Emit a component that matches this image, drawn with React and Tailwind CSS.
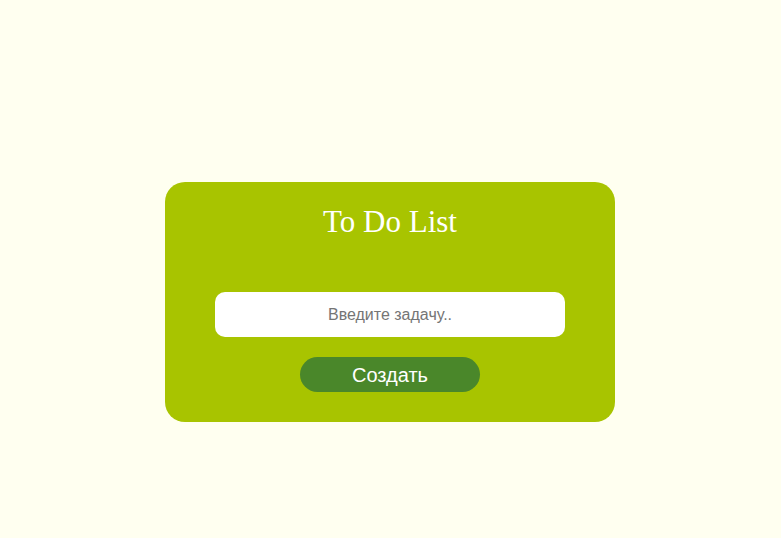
import React, { useState } from 'react';

const App = () => {
  const [task, setTask] = useState('');

  return (
    <div className="min-h-[538px] w-full bg-[#fffff0] flex justify-center pt-[182px] pr-px">
      <div className="w-[450px] h-[240px] bg-[#a8c400] rounded-[20px] flex flex-col items-center">
        <h1 className="mt-[20px] text-[31px] leading-[40px] text-white font-['Liberation_Serif',serif]">
          To Do List
        </h1>
        <input
          type="text"
          value={task}
          onChange={(e) => setTask(e.target.value)}
          placeholder="Введите задачу.."
          className="mt-[50px] w-[350px] h-[45px] bg-white rounded-[10px] text-center text-[16px] text-[#333] placeholder:text-[#757575] outline-none font-['Liberation_Sans',sans-serif]"
        />
        <button className="mt-[20px] w-[180px] h-[35px] rounded-full bg-[#4a872a] text-white text-[20px] font-['Liberation_Sans',sans-serif]">
          Создать
        </button>
      </div>
    </div>
  );
};

export default App;
